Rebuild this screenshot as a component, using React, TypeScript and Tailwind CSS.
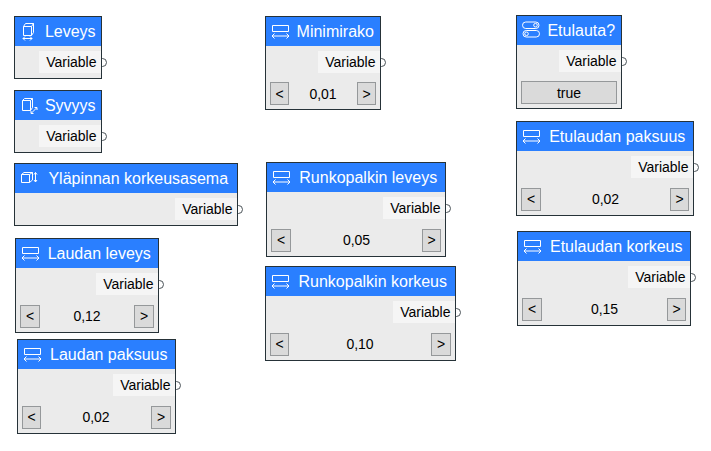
import React from 'react';

type IconName = 'width' | 'depth' | 'height' | 'range' | 'toggle';

type NodeProps = {
  title: string;
  icon: IconName;
  pos: string;
  value?: string;
  valueClass?: string;
  prevClass?: string;
  nextClass?: string;
  toggle?: string;
};

const nodes: NodeProps[] = [
  { title: 'Leveys', icon: 'width', pos: 'left-[14px] top-[16px] w-[88px] h-[63px]' },
  { title: 'Syvyys', icon: 'depth', pos: 'left-[14px] top-[90px] w-[88px] h-[63px]' },
  { title: 'Yläpinnan korkeusasema', icon: 'height', pos: 'left-[14px] top-[163px] w-[224px] h-[63px]' },
  { title: 'Laudan leveys', icon: 'range', value: '0,12', prevClass: 'w-5', nextClass: 'w-5', pos: 'left-[15px] top-[238px] w-[144px] h-[95px]' },
  { title: 'Laudan paksuus', icon: 'range', value: '0,02', nextClass: 'w-5', pos: 'left-[17px] top-[339px] w-[159px] h-[95px]' },
  { title: 'Minimirako', icon: 'range', value: '0,01', valueClass: 'pb-0', pos: 'left-[265px] top-[16px] w-[116px] h-[94px]' },
  { title: 'Runkopalkin leveys', icon: 'range', value: '0,05', prevClass: 'w-5', pos: 'left-[266px] top-[162px] w-[180px] h-[95px]' },
  { title: 'Runkopalkin korkeus', icon: 'range', value: '0,10', nextClass: 'w-5', pos: 'left-[265px] top-[266px] w-[191px] h-[95px]' },
  { title: 'Etulauta?', icon: 'toggle', toggle: 'true', pos: 'left-[516px] top-[15px] w-[106px] h-[94px]' },
  { title: 'Etulaudan paksuus', icon: 'range', value: '0,02', prevClass: 'w-5', pos: 'left-[516px] top-[121px] w-[178px] h-[95px]' },
  { title: 'Etulaudan korkeus', icon: 'range', value: '0,15', prevClass: 'w-5', pos: 'left-[517px] top-[231px] w-[174px] h-[95px]' },
];

const icons: Record<IconName, React.ReactNode> = {
  width: (
    <>
      <path d="M3.5 5.5h8v9h-8zM3.5 5.5l2-3h8l-2 3M13.5 2.5v9l-2 3" />
      <path d="M3 17.5h9M5 15.5l-2 2 2 2M10 15.5l2 2-2 2" />
    </>
  ),
  depth: (
    <>
      <path d="M2.5 5.5h8v10h-8zM2.5 5.5l2-2h8l-2 2M12.5 3.5v9l-2 3" />
      <path d="M11.5 18l5-5M14.5 12.5h2.5v2.5M11 16v2.5h2.5" />
    </>
  ),
  height: (
    <>
      <path d="M1.5 6.5h8v8h-8zM1.5 6.5l2.5-2h8.5l-3 2M12.5 4.5v7.5l-3 2.5" />
      <path d="M15.5 4.5v9.5M14 6.5l1.5-2 1.5 2M14 12l1.5 2 1.5-2" />
    </>
  ),
  range: (
    <>
      <path d="M1.5 4.5h16v6h-16z" />
      <path d="M1 15h17M3.5 12.5l-2.5 2.5 2.5 2.5M15.5 12.5l2.5 2.5-2.5 2.5" />
    </>
  ),
  toggle: (
    <>
      <rect x="0.5" y="2" width="16.5" height="6.5" rx="3.25" />
      <circle cx="13.5" cy="5.2" r="1.8" />
      <rect x="1" y="10.5" width="16.5" height="6.5" rx="3.25" />
      <circle cx="4.5" cy="13.8" r="1.8" />
    </>
  ),
};

const buttonClass: string =
  'flex h-[23px] items-center justify-center border border-[#95989a] bg-[#dadada]';

const Node: React.FC<NodeProps> = ({
  title,
  icon,
  pos,
  value,
  valueClass = 'pb-0.5',
  prevClass = 'w-[19px]',
  nextClass = 'w-[19px]',
  toggle,
}) => {
  return (
    <div className={`absolute ${pos}`}>
      {/* output port, half hidden behind the card */}
      <span className="absolute -right-[4.5px] top-[41.5px] size-[9px] rounded-full border border-[#4b5358] bg-white" />
      <div className="relative flex h-full flex-col border border-[#263238] bg-[#ebebeb]">
        <div className="flex h-[29px] shrink-0 bg-[#2a7fff] pl-[5px] text-white">
          <svg
            className="mt-1 size-5 shrink-0"
            viewBox="0 0 20 20"
            fill="none"
            stroke="currentColor"
            strokeWidth="1"
          >
            {icons[icon]}
          </svg>
          <span className="flex-1 whitespace-nowrap pr-[0.5px] text-center text-base leading-[29px]">{title}</span>
        </div>
        <div className="mt-[5px] flex h-[22px] shrink-0 justify-end">
          <span className="w-[62px] bg-[#f5f5f5] pr-[4.5px] text-right text-sm leading-[22px]">
            Variable
          </span>
        </div>
        {value && (
          <div className="mt-auto mb-1 flex items-center justify-between px-1 text-sm">
            <button className={`${buttonClass} ${valueClass} ${prevClass}`}>&lt;</button>
            <span className={valueClass}>{value}</span>
            <button className={`${buttonClass} ${valueClass} ${nextClass}`}>&gt;</button>
          </div>
        )}
        {toggle && (
          <div className="mt-auto mb-1 px-1 text-sm">
            <button className={`${buttonClass} w-full`}>{toggle}</button>
          </div>
        )}
      </div>
    </div>
  );
};

const App: React.FC = () => {
  return (
    <main className="relative h-[451px] w-[711px] overflow-hidden bg-white font-['Liberation_Sans',Arial,sans-serif] text-black">
      {nodes.map((node) => (
        <Node key={node.title} {...node} />
      ))}
    </main>
  );
};

export default App;
